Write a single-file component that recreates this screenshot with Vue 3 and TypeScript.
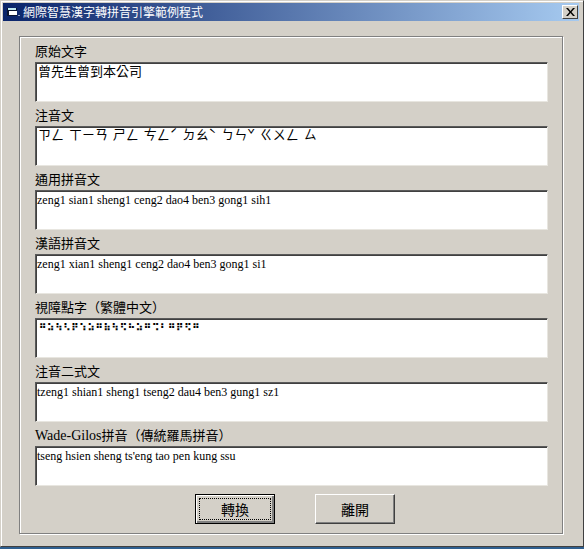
<script setup lang="ts">
interface Field {
  label: string
  prefix?: string
  text: string
  kind?: string
}

const fields: Field[] = [
  { label: '原始文字', text: '曾先生曾到本公司', kind: 'cjk' },
  { label: '注音文', text: 'ㄗㄥ ㄒㄧㄢ ㄕㄥ ㄘㄥˊ ㄉㄠˋ ㄅㄣˇ ㄍㄨㄥ ㄙ', kind: 'cjk bopomofo' },
  { label: '通用拼音文', text: 'zeng1 sian1 sheng1 ceng2 dao4 ben3 gong1 sih1' },
  { label: '漢語拼音文', text: 'zeng1 xian1 sheng1 ceng2 dao4 ben3 gong1 si1' },
  { label: '視障點字（繁體中文）', text: '⠛⠵⠳⠣⠟⠱⠵⠛⠷⠳⠫⠓⠵⠛⠩⠃⠛⠟⠫⠛', kind: 'braille' },
  { label: '注音二式文', text: 'tzeng1 shian1 sheng1 tseng2 dau4 ben3 gung1 sz1' },
  { prefix: 'Wade-Gilos', label: '拼音（傳統羅馬拼音）', text: "tseng hsien sheng ts'eng tao pen kung ssu" },
]
</script>

<template>
  <div class="window">
    <div class="titlebar">
      <svg class="app-icon" width="16" height="14" viewBox="0 0 16 14">
        <rect x="2" y="3" width="10" height="8" fill="#0a1430" />
        <rect x="3" y="3" width="8" height="2" fill="#bfe8f0" />
        <rect x="4" y="6" width="8" height="4" fill="#fff" />
        <rect x="13" y="10" width="2" height="1" fill="#8fa0c0" />
      </svg>
      <span class="title">網際智慧漢字轉拼音引擎範例程式</span>
      <button class="close" aria-label="close">
        <svg width="9" height="8" viewBox="0 0 9 8">
          <path d="M0 0h2l2.500 3L7 0h2L5.500 4 9 8H7L4.500 5 2 8H0l3.500-4z" fill="#000" />
        </svg>
      </button>
    </div>
    <div class="group">
      <div v-for="f in fields" :key="f.label" class="field">
        <label class="field-label"><span v-if="f.prefix" class="prefix">{{ f.prefix }}</span>{{ f.label }}</label>
        <div class="textbox" :class="f.kind">{{ f.text }}</div>
      </div>
      <div class="buttons">
        <button class="btn focused"><span>轉換</span></button>
        <button class="btn"><span>離開</span></button>
      </div>
    </div>
  </div>
</template>

<style>
html,
body {
  margin: 0;
  height: 549px;
  overflow: hidden;
  background: #2f5f8f;
}
</style>

<style scoped>
.window {
  box-sizing: border-box;
  width: 584px;
  height: 547px;
  padding: 2px 3px 0 2px;
  background: #d4d0c8;
  border-style: solid;
  border-width: 1px;
  border-color: #d4d0c8 #404040 #404040 #d4d0c8;
  box-shadow: inset 1px 1px 0 #fff;
  font-family: "Liberation Serif", "Noto Sans CJK TC", serif;
  color: #000;
}

.titlebar {
  display: flex;
  align-items: center;
  height: 18px;
  margin-right: 1px;
  padding-left: 2px;
  background: linear-gradient(90deg, #0a246a, #a6caf0);
}

.app-icon {
  flex: none;
  margin-right: 2px;
}

.title {
  flex: 1;
  color: #fff;
  font-family: "Noto Sans CJK TC", sans-serif;
  font-size: 12px;
  line-height: 18px;
}

.close {
  display: flex;
  align-items: center;
  justify-content: center;
  width: 16px;
  height: 14px;
  margin-right: 1px;
  padding: 0;
  background: #d4d0c8;
  border: 1px solid;
  border-color: #fff #404040 #404040 #fff;
}

.group {
  box-sizing: border-box;
  width: 544px;
  height: 498px;
  margin: 15px 0 0 16px;
  padding: 1px 0 0 15px;
  border: 1px solid #808080;
  box-shadow: inset 1px 1px 0 #fff, 1px 1px 0 #fff;
}

.field-label {
  display: block;
  height: 24px;
  padding-top: 4px;
  box-sizing: border-box;
  font-size: 13px;
  line-height: 19px;
}

.prefix {
  font-size: 14px;
}

.textbox {
  box-sizing: border-box;
  width: 513px;
  height: 40px;
  padding: 1px 1px 0 1px;
  background: #fff;
  border: 1px solid;
  border-color: #5a5a5a #e8e6e0 #e8e6e0 #5a5a5a;
  box-shadow: inset 1px 1px 0 #404040;
  font-family: "Liberation Serif", "Noto Sans CJK TC", serif;
  font-size: 12px;
  line-height: 16px;
  white-space: pre;
}

.textbox.cjk {
  padding: 0 1px 0 2px;
  font-family: "Noto Sans CJK TC", sans-serif;
  font-size: 13px;
}

.textbox.bopomofo {
  line-height: 14px;
  word-spacing: 2px;
}

.textbox.braille {
  padding-left: 3px;
  font-family: "DejaVu Sans", sans-serif;
  font-size: 10px;
  font-weight: bold;
  letter-spacing: 0.25px;
}

.buttons {
  display: flex;
  gap: 40px;
  margin: 8px 0 0 160px;
}

.btn {
  box-sizing: border-box;
  width: 80px;
  height: 30px;
  padding: 0;
  background: #d4d0c8;
  border: 1px solid;
  border-color: #fff #404040 #404040 #fff;
  box-shadow: inset -1px -1px 0 #808080;
  font-family: "Noto Sans CJK TC", sans-serif;
  font-size: 14px;
  color: #000;
}

.btn.focused {
  position: relative;
  border-color: #000;
  box-shadow: inset 1px 1px 0 #fff, inset -2px -2px 0 #808080;
}

.btn.focused::after {
  content: "";
  position: absolute;
  inset: 3px;
  border: 1px dotted #000;
}
</style>
